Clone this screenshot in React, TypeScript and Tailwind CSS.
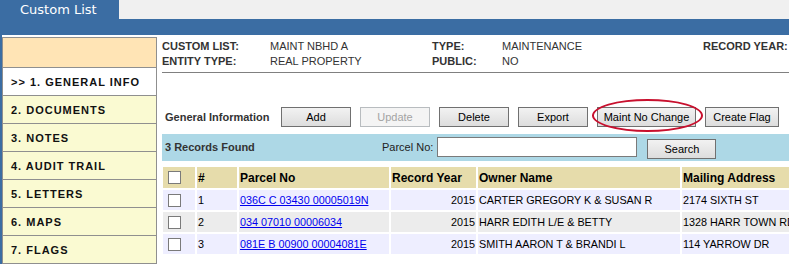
import React from "react";

const navItems = [
    { text: ">> 1. GENERAL INFO", active: true },
    { text: "2. DOCUMENTS" },
    { text: "3. NOTES" },
    { text: "4. AUDIT TRAIL" },
    { text: "5. LETTERS" },
    { text: "6. MAPS" },
    { text: "7. FLAGS" },
];

const rows = [
    { n: 1, parcel: "036C C 03430 00005019N", year: "2015", owner: "CARTER GREGORY K & SUSAN R", addr: "2174 SIXTH ST" },
    { n: 2, parcel: "034 07010 00006034", year: "2015", owner: "HARR EDITH L/E & BETTY", addr: "1328 HARR TOWN RD" },
    { n: 3, parcel: "081E B 00900 00004081E", year: "2015", owner: "SMITH AARON T & BRANDI L", addr: "114 YARROW DR" },
];

type BtnProps = {
    text: string;
    width: string;
    disabled?: boolean;
};

const Btn = ({ text, width, disabled }: BtnProps) => {
    return (
        <div
            className={`${width} h-[20px] flex items-center justify-center text-[11px] border ${
                disabled
                    ? "border-[#b8bcbf] text-[#a3a3a3] bg-[#f4f4f4]"
                    : "border-[#707070] text-black bg-gradient-to-b from-[#f2f2f2] to-[#dddddd]"
            }`}
        >
            {text}
        </div>
    );
};

const Check = () => <span className="block w-[13px] h-[13px] border border-[#7a7a7a] bg-white ml-[5px]" />;

export default function App() {
    return (
        <div className="w-[789px] h-[265px] overflow-hidden bg-white font-['Liberation_Sans',Arial,sans-serif] text-[#333]">
            {/* tab strip */}
            <div className="flex h-[19px]">
                <div className="w-[119px] bg-[#3b6da3] pl-[20px] flex items-center font-['DejaVu_Sans',Verdana,sans-serif] text-[13px] text-white">
                    Custom List
                </div>
                <div className="flex-1 bg-[#f0f0f0]" />
            </div>
            <div className="h-[16px] bg-[#3b6da3]" />

            <div className="flex">
                {/* left nav */}
                <div className="w-[157px] shrink-0 border-l-2 border-[#3b6da3] pt-[2px] flex flex-col">
                    <div className="h-[31px] bg-[#ffe4b5] border border-[#8f8f8f]" />
                    {navItems.map((item) => (
                        <div
                            key={item.text}
                            className={`h-[28px] shrink-0 flex items-center pl-[8px] pt-[1px] border-x border-b border-[#8f8f8f] text-[11px] font-bold tracking-[1px] text-[#111] ${
                                item.active ? "bg-white" : "bg-[#fafad2]"
                            }`}
                        >
                            {item.text}
                        </div>
                    ))}
                </div>

                {/* main */}
                <div className="flex-1 min-w-0 overflow-hidden pl-[5px] pt-[4px]">
                    <div className="grid grid-cols-[108px_162px_70px_201px_200px] text-[11px] leading-[15px] whitespace-nowrap">
                        <span className="font-bold">CUSTOM LIST:</span>
                        <span>MAINT NBHD A</span>
                        <span className="font-bold">TYPE:</span>
                        <span>MAINTENANCE</span>
                        <span className="font-bold">RECORD YEAR:</span>
                        <span className="font-bold">ENTITY TYPE:</span>
                        <span>REAL PROPERTY</span>
                        <span className="font-bold">PUBLIC:</span>
                        <span>NO</span>
                        <span />
                    </div>
                    <div className="mt-[3px] border-t border-[#808080] w-[700px]" />

                    {/* toolbar */}
                    <div className="mt-[34px] flex items-center h-[20px]">
                        <span className="w-[119px] pl-[3px] text-[11px] font-bold">General Information</span>
                        <div className="flex gap-[9px]">
                            <Btn text="Add" width="w-[70px]" />
                            <Btn text="Update" width="w-[70px]" disabled />
                            <Btn text="Delete" width="w-[70px]" />
                            <Btn text="Export" width="w-[70px]" />
                            <div className="relative">
                                <Btn text="Maint No Change" width="w-[99px]" />
                                <span className="absolute -left-[5px] -top-[8px] w-[111px] h-[33px] rounded-[50%] border-2 border-[#c8102e]" />
                            </div>
                            <Btn text="Create Flag" width="w-[74px]" />
                        </div>
                    </div>

                    {/* search bar */}
                    <div className="mt-[7px] h-[27px] w-[700px] bg-[#add8e6] flex items-center">
                        <span className="w-[220px] pl-[3px] text-[11px] font-bold">3 Records Found</span>
                        <span className="text-[11px] text-[#222]">Parcel No:</span>
                        <span className="ml-[4px] w-[200px] h-[20px] bg-white border border-[#7a7a7a] -mt-[1px]" />
                        <div className="ml-[10px] mt-[3px]">
                            <Btn text="Search" width="w-[69px]" />
                        </div>
                    </div>

                    {/* table */}
                    <div className="mt-[6px] ml-[1px] grid grid-cols-[32px_40px_150px_85px_202px_200px] gap-[2px] whitespace-nowrap text-black">
                        <div className="h-[21px] bg-[#e6dcab] flex items-center"><Check /></div>
                        <div className="h-[21px] bg-[#e6dcab] flex items-center pl-[1px] pt-[1px] text-[12px] font-bold">#</div>
                        <div className="h-[21px] bg-[#e6dcab] flex items-center pl-[1px] pt-[1px] text-[12px] font-bold">Parcel No</div>
                        <div className="h-[21px] bg-[#e6dcab] flex items-center pl-[1px] pt-[1px] text-[12px] font-bold">Record Year</div>
                        <div className="h-[21px] bg-[#e6dcab] flex items-center pl-[1px] pt-[1px] text-[12px] font-bold">Owner Name</div>
                        <div className="h-[21px] bg-[#e6dcab] flex items-center pl-[1px] pt-[1px] text-[12px] font-bold">Mailing Address</div>
                        {rows.map((r) => {
                            const bg = r.n % 2 === 0 ? "bg-[#ececec]" : "bg-[#eeeeff]";
                            return (
                                <React.Fragment key={r.n}>
                                    <div className={`h-[20px] ${bg} flex items-center`}><Check /></div>
                                    <div className={`h-[20px] ${bg} flex items-center pl-[1px] pt-[1px] text-[10.8px]`}>{r.n}</div>
                                    <div className={`h-[20px] ${bg} flex items-center pl-[1px] pt-[1px] text-[10.8px]`}>
                                        <a href="#" className="text-[#0000ee] underline">{r.parcel}</a>
                                    </div>
                                    <div className={`h-[20px] ${bg} flex items-center justify-end pr-[1px] pt-[1px] text-[10.8px]`}>{r.year}</div>
                                    <div className={`h-[20px] ${bg} flex items-center pl-[1px] pt-[1px] text-[10.8px]`}>{r.owner}</div>
                                    <div className={`h-[20px] ${bg} flex items-center pl-[1px] pt-[1px] text-[10.8px]`}>{r.addr}</div>
                                </React.Fragment>
                            );
                        })}
                    </div>
                </div>
            </div>
        </div>
    );
}
